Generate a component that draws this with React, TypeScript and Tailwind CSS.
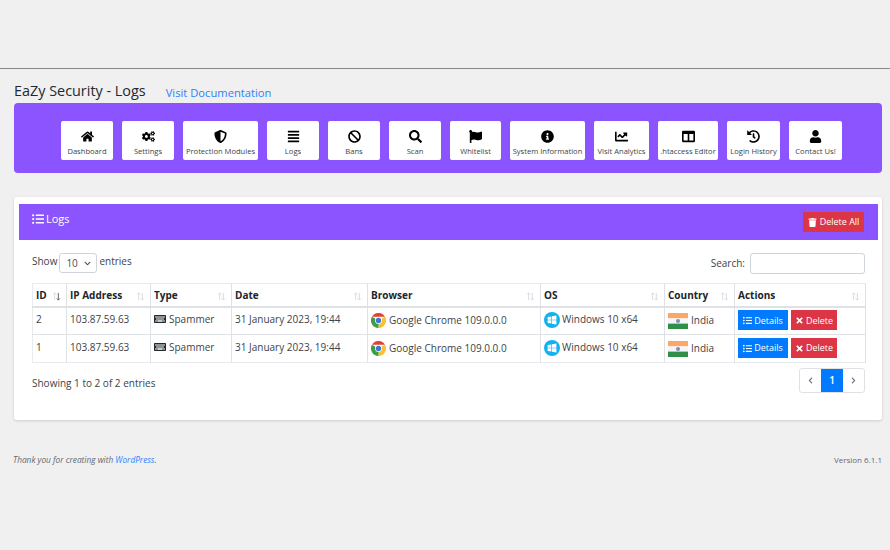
import React, { ReactNode } from 'react';
import {
  FaHome, FaCogs, FaShieldAlt, FaAlignJustify, FaBan, FaSearch, FaFlag, FaInfoCircle, FaChartLine,
  FaColumns, FaHistory, FaUser, FaListUl, FaTrash, FaTimes, FaKeyboard, FaChevronLeft, FaChevronRight, FaChevronDown,
} from 'react-icons/fa';

const navItems: { label: string; icon: ReactNode; width: string }[] = [
  { label: 'Dashboard', icon: <FaHome />, width: 'w-[52px]' },
  { label: 'Settings', icon: <FaCogs />, width: 'w-[52px]' },
  { label: 'Protection Modules', icon: <FaShieldAlt />, width: 'w-[75px]' },
  { label: 'Logs', icon: <FaAlignJustify />, width: 'w-[52px]' },
  { label: 'Bans', icon: <FaBan />, width: 'w-[52px]' },
  { label: 'Scan', icon: <FaSearch />, width: 'w-[52px]' },
  { label: 'Whitelist', icon: <FaFlag />, width: 'w-[51px]' },
  { label: 'System Information', icon: <FaInfoCircle />, width: 'w-[75px]' },
  { label: 'Visit Analytics', icon: <FaChartLine />, width: 'w-[55px]' },
  { label: '.htaccess Editor', icon: <FaColumns />, width: 'w-[60px]' },
  { label: 'Login History', icon: <FaHistory />, width: 'w-[53px]' },
  { label: 'Contact Us!', icon: <FaUser />, width: 'w-[53px]' },
];

const columns = [
  { label: 'ID', width: 'w-[34px]' },
  { label: 'IP Address', width: 'w-[84px]' },
  { label: 'Type', width: 'w-[81px]' },
  { label: 'Date', width: 'w-[136px]' },
  { label: 'Browser', width: 'w-[173px]' },
  { label: 'OS', width: 'w-[124px]' },
  { label: 'Country', width: 'w-[70px]' },
  { label: 'Actions', width: 'w-[131px]' },
];

function ChromeIcon() {
  return (
    <svg viewBox="0 0 48 48" className="w-[15px] h-[15px] shrink-0">
      <path d="M3.2 12A24 24 0 0 1 44.8 12H24z" fill="#e34133" />
      <path d="M44.8 12A24 24 0 0 1 24 48L24 24z" fill="#fbc02d" />
      <path d="M24 48A24 24 0 0 1 3.2 12L24 24z" fill="#3f9d47" />
      <circle cx="24" cy="24" r="11" fill="#fff" />
      <circle cx="24" cy="24" r="8.5" fill="#3b78d8" />
    </svg>
  );
}

function WindowsIcon() {
  return (
    <svg viewBox="0 0 16 16" className="w-[16px] h-[16px] shrink-0">
      <circle cx="8" cy="8" r="8" fill="#12b2ee" />
      <path d="M3.6 5l3.8-.6v3.3H3.6zM8 4.3l4.4-.7v4.1H8zM3.6 8.3h3.8v3.3L3.6 11zM8 8.3h4.4v4.1L8 11.7z" fill="#fff" />
    </svg>
  );
}

function IndiaFlag() {
  return (
    <svg viewBox="0 0 20 16" className="w-[20px] h-[16px] shrink-0">
      <rect width="20" height="5.4" fill="#f9a869" />
      <rect y="5.4" width="20" height="5.2" fill="#f5f5f5" />
      <rect y="10.6" width="20" height="5.4" fill="#2f8f46" />
      <circle cx="10" cy="8" r="2" fill="#7d8fc0" />
    </svg>
  );
}

function SortArrows({ active }: { active?: boolean }) {
  return (
    <svg viewBox="0 0 10 10" className="absolute right-[5px] top-[8px] w-[9px] h-[9px]" fill="none" strokeWidth="1">
      <path d="M3 9V1M1.3 2.8L3 1l1.7 1.8" stroke="#d5d8dc" />
      <path d="M7 1v8M5.3 7.2L7 9l1.7-1.8" stroke={active ? '#555b62' : '#d5d8dc'} />
    </svg>
  );
}

function LogRow({ id }: { id: number }) {
  const cell = 'border-r border-t border-[#dee2e6] pl-[3px] align-middle text-[10px] text-[#3c434a]';
  const text = 'block mt-[-3px]';
  return (
    <tr className="h-[28px]">
      <td className={cell}><span className={text}>{id}</span></td>
      <td className={cell}><span className={text}>103.87.59.63</span></td>
      <td className={cell}>
        <span className="flex items-center gap-[3px] mt-[-3px]">
          <FaKeyboard className="text-[12px] text-[#23282d]" /> Spammer
        </span>
      </td>
      <td className={cell}><span className={text}>31 January 2023, 19:44</span></td>
      <td className={cell}>
        <span className="flex items-center gap-[3px]">
          <ChromeIcon /> <span className="mt-[-1px]">Google Chrome 109.0.0.0</span>
        </span>
      </td>
      <td className={cell}>
        <span className="flex items-center gap-[2px] mt-[-2px]">
          <WindowsIcon /> Windows 10 x64
        </span>
      </td>
      <td className={cell}>
        <span className="flex items-center gap-[3px]">
          <IndiaFlag /> India
        </span>
      </td>
      <td className={cell}>
        <span className="flex items-center gap-[3px] mt-[-1px]">
          <button className="flex items-center gap-[2px] h-[20px] w-[50px] justify-center bg-[#007bff] text-white text-[9px]">
            <FaListUl className="text-[9px]" /> Details
          </button>
          <button className="flex items-center gap-[2px] h-[20px] w-[46px] justify-center bg-[#dc3545] text-white text-[9px]">
            <FaTimes className="text-[9px]" /> Delete
          </button>
        </span>
      </td>
    </tr>
  );
}

export default function App() {
  return (
    <div className="min-h-[550px] bg-[#f0f0f1] font-['Open_Sans','Noto_Sans',sans-serif] text-[#3c434a] overflow-hidden">
      <div className="h-[69px] border-b border-[#888888]" />

      <div className="h-[34px] pl-[14px] flex items-center gap-[20px]">
        <h1 className="text-[14.4px] leading-none text-[#23282d] pt-[10px]">EaZy Security - Logs</h1>
        <a className="text-[11.2px] leading-none text-[#2f80fb] pt-[13px]">Visit Documentation</a>
      </div>

      <div className="mx-[14px] mr-[8px] h-[70px] bg-[#8c54ff] rounded-[4px] flex pl-[47px] pt-[18px] gap-[9px]">
        {navItems.map((item) => (
          <div
            key={item.label}
            className={`${item.width} h-[39px] bg-white rounded-[2px] flex flex-col items-center pt-[9px] shrink-0`}
          >
            <span className="text-[13px] leading-none text-black">{item.icon}</span>
            <span className="text-[7.6px] leading-none mt-[5px] whitespace-nowrap text-[#3c434a]">{item.label}</span>
          </div>
        ))}
      </div>

      <div className="mx-[14px] mr-[8px] mt-[24px] h-[223px] bg-white rounded-[3px] shadow-[0_1px_3px_rgba(0,0,0,0.15)] pt-[7px] px-[5px]">
        <div className="h-[36px] bg-[#8c54ff] flex items-start justify-between pl-[13px] pr-[14px] mr-[-1px]">
          <span className="flex items-center gap-[2px] text-white text-[11px] pt-[7px]">
            <FaListUl className="text-[12px]" /> Logs
          </span>
          <button className="mt-[8px] flex items-center gap-[3px] h-[20px] w-[61px] justify-center bg-[#dc3545] text-white text-[9px]">
            <FaTrash className="text-[9px]" /> Delete All
          </button>
        </div>

        <div className="flex justify-between items-center pl-[13px] pr-[12px] pt-[3px] h-[43px] text-[10px]">
          <span className="flex items-center gap-[2px]">
            <span className="mt-[-4px]">Show</span>
            <span className="w-[38px] h-[20px] border border-[#ced4da] rounded-[3px] flex items-center justify-between pl-[6px] pr-[5px] text-[#495057]">
              10 <FaChevronDown className="text-[7px]" />
            </span>
            <span className="mt-[-4px]">entries</span>
          </span>
          <span className="flex items-center gap-[5px]">
            Search:
            <input className="w-[115px] h-[21px] border border-[#ced4da] rounded-[3px] bg-white" />
          </span>
        </div>

        <div className="pl-[13px] pr-[12px]">
          <table className="table-fixed border-collapse w-[833px] border-t border-l border-b border-[#e9ecef]">
            <thead>
              <tr className="h-[23px]">
                {columns.map((col, i) => (
                  <th
                    key={col.label}
                    className={`${col.width} relative border-r border-b-2 border-[#dee2e6] pl-[3px] pt-[1px] text-left text-[10px] font-bold text-[#212529]`}
                  >
                    {col.label}
                    <SortArrows active={i === 0} />
                  </th>
                ))}
              </tr>
            </thead>
            <tbody>
              <LogRow id={2} />
              <LogRow id={1} />
            </tbody>
          </table>

          <div className="flex justify-between items-start pt-[5px]">
            <span className="text-[10px] pt-[8px]">Showing 1 to 2 of 2 entries</span>
            <div className="flex h-[25px] border border-[#dee2e6] rounded-[3px] items-stretch">
              <span className="w-[21px] flex items-center justify-center text-[#6c757d]">
                <FaChevronLeft className="text-[7px]" />
              </span>
              <span className="w-[22px] flex items-center justify-center bg-[#007bff] text-white text-[10px] font-semibold">1</span>
              <span className="w-[21px] flex items-center justify-center text-[#6c757d]">
                <FaChevronRight className="text-[7px]" />
              </span>
            </div>
          </div>
        </div>
      </div>

      <div className="flex justify-between pl-[13px] pr-[8px] pt-[35px] text-[8px] leading-[10px] text-[#646970]">
        <span className="italic text-[8.3px]">
          Thank you for creating with <a className="text-[#2f80fb]">WordPress</a>.
        </span>
        <span>Version 6.1.1</span>
      </div>
    </div>
  );
}
